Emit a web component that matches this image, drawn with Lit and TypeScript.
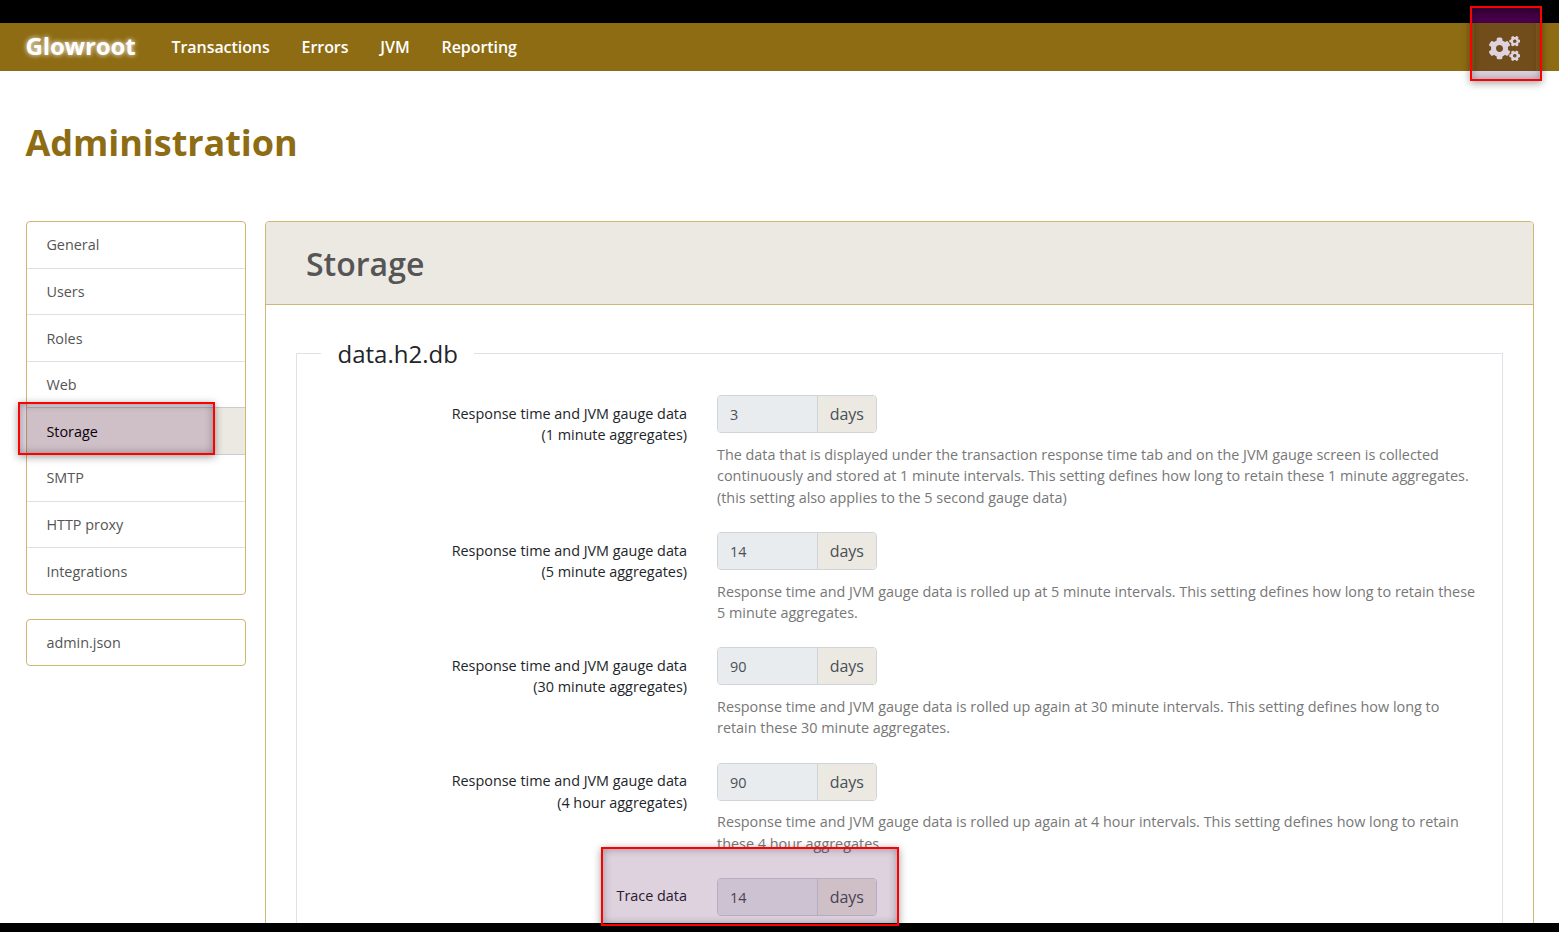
import { LitElement, html, css } from "lit";
import { customElement } from "lit/decorators.js";
import { classMap } from "lit/directives/class-map.js";

const NAV = ["Transactions", "Errors", "JVM", "Reporting"];
const MENU = ["General", "Users", "Roles", "Web", "Storage", "SMTP", "HTTP proxy", "Integrations"];

const ROWS = [
  {
    label: ["Response time and JVM gauge data", "(1 minute aggregates)"],
    value: "3",
    help: [
      "The data that is displayed under the transaction response time tab and on the JVM gauge screen is collected",
      "continuously and stored at 1 minute intervals. This setting defines how long to retain these 1 minute aggregates.",
      "(this setting also applies to the 5 second gauge data)",
    ],
  },
  {
    label: ["Response time and JVM gauge data", "(5 minute aggregates)"],
    value: "14",
    help: [
      "Response time and JVM gauge data is rolled up at 5 minute intervals. This setting defines how long to retain these",
      "5 minute aggregates.",
    ],
  },
  {
    label: ["Response time and JVM gauge data", "(30 minute aggregates)"],
    value: "90",
    help: [
      "Response time and JVM gauge data is rolled up again at 30 minute intervals. This setting defines how long to",
      "retain these 30 minute aggregates.",
    ],
  },
  {
    label: ["Response time and JVM gauge data", "(4 hour aggregates)"],
    value: "90",
    help: [
      "Response time and JVM gauge data is rolled up again at 4 hour intervals. This setting defines how long to retain",
      "these 4 hour aggregates.",
    ],
  },
  { label: ["Trace data"], value: "14", help: [] },
];

const SMALL_COG =
  "M512.1 191l-8.2 14.3c-3 5.3-9.4 7.5-15.1 5.4-11.8-4.4-22.6-10.7-32.1-18.6-4.6-3.8-5.8-10.5-2.8-15.7l8.2-14.3c-6.9-8-12.3-17.3-15.9-27.4h-16.5c-6 0-11.2-4.3-12.2-10.3-2-12-2.1-24.6 0-37.1 1-6 6.2-10.4 12.2-10.4h16.5c3.6-10.1 9-19.4 15.9-27.4l-8.2-14.3c-3-5.2-1.9-11.9 2.8-15.7 9.5-7.9 20.4-14.2 32.1-18.6 5.7-2.1 12.1.1 15.1 5.4l8.2 14.3c10.5-1.9 21.2-1.9 31.7 0L552 6.3c3-5.3 9.4-7.5 15.1-5.4 11.8 4.4 22.6 10.7 32.1 18.6 4.6 3.8 5.8 10.5 2.8 15.7l-8.2 14.3c6.9 8 12.3 17.3 15.9 27.4h16.5c6 0 11.2 4.3 12.2 10.3 2 12 2.1 24.6 0 37.1-1 6-6.2 10.4-12.2 10.4h-16.5c-3.6 10.1-9 19.4-15.9 27.4l8.2 14.3c3 5.2 1.9 11.9-2.8 15.7-9.5 7.9-20.4 14.2-32.1 18.6-5.7 2.1-12.1-.1-15.1-5.4l-8.2-14.3c-10.4 1.9-21.2 1.9-31.7 0zm-10.5-58.8c38.5 29.6 82.4-14.3 52.8-52.8-38.5-29.7-82.4 14.3-52.8 52.8z";
const LARGE_COG =
  "M386.3 286.1l33.7 16.8c10.1 5.8 14.5 18.1 10.5 29.1-8.9 24.2-26.4 46.4-42.6 65.8-7.4 8.9-20.2 11.1-30.3 5.3l-29.1-16.8c-16 13.7-34.6 24.6-54.9 31.7v33.6c0 11.6-8.3 21.6-19.7 23.6-24.6 4.2-50.4 4.4-75.9 0-11.5-2-20-11.9-20-23.6V418c-20.3-7.2-38.9-18-54.9-31.7L74 403c-10 5.8-22.9 3.6-30.3-5.3-16.2-19.4-33.3-41.6-42.2-65.7-4-10.9.4-23.2 10.5-29.1l33.3-16.8c-3.9-20.9-3.9-42.4 0-63.4L12 205.8c-10.1-5.8-14.6-18.1-10.5-29 8.9-24.2 26-46.4 42.2-65.8 7.4-8.9 20.2-11.1 30.3-5.3l29.1 16.8c16-13.7 34.6-24.6 54.9-31.7V57.1c0-11.5 8.2-21.5 19.6-23.5 24.6-4.2 50.5-4.4 76-.1 11.5 2 20 11.9 20 23.6v33.6c20.3 7.2 38.9 18 54.9 31.7l29.1-16.8c10-5.8 22.9-3.6 30.3 5.3 16.2 19.4 33.2 41.6 42.1 65.8 4 10.9.1 23.2-10 29.1l-33.7 16.8c3.9 21 3.9 42.5 0 63.5zm-117.6 21.1c59.2-77-28.7-164.9-105.7-105.7-59.2 77 28.7 164.9 105.7 105.7z";

@customElement("app-root")
export class AppRoot extends LitElement {
  static styles = css`
    :host {
      display: flex;
      flex-direction: column;
      position: relative;
      box-sizing: border-box;
      height: 932px;
      overflow: hidden;
      background: #fff;
      color: #212529;
      font: 14.4px/21.6px "Open Sans", "Noto Sans", sans-serif;
    }
    * { box-sizing: border-box; }
    .strip { flex: none; height: 23px; background: #000; }
    .strip.bottom { height: 9px; }
    .navbar {
      flex: none;
      display: flex;
      align-items: center;
      height: 48px;
      padding: 0 23px 0 25.5px;
      background: #8e6c14;
      color: #fff;
      font-size: 16px;
      font-weight: 600;
    }
    .brand {
      width: 146px;
      padding-bottom: 2px;
      font-size: 24px;
      letter-spacing: -0.15px;
      font-weight: 700;
      text-shadow: 0 0 5px #fff;
    }
    .links { display: flex; gap: 31.9px; padding-top: 1px; letter-spacing: -0.06px; }
    .tool {
      margin-left: auto;
      display: flex;
      align-items: center;
      width: 62px;
      height: 48px;
      padding: 2px 0 0 15px;
      background: #795e10;
    }
    .gears { width: 31.25px; height: 25px; display: block; fill: #fff; }
    .title {
      flex: none;
      margin: 0;
      padding: 49px 25.5px 56px;
      line-height: 45px;
      font-size: 36px;
      letter-spacing: -0.05px;
      font-weight: 700;
      color: #8e6c14;
    }
    .layout {
      flex: 1;
      min-height: 0;
      overflow: hidden;
      display: flex;
      align-items: flex-start;
      gap: 19px;
      padding: 0 25px 0 26px;
    }
    .side { width: 220px; display: flex; flex-direction: column; gap: 24px; }
    .list { border: 1px solid #ceb675; border-radius: 4px; overflow: hidden; color: #555; }
    .item { height: 46.6px; padding: 12.43px 19.4px 0; border-bottom: 1px solid #dfdfdf; }
    .item:last-child { border-bottom: 0; height: 45.6px; }
    .item.before { border-bottom-color: #ccc; }
    .item.active { background: #ece9e2; color: #000; border-bottom-color: #ccc; }
    .card { flex: 1; border: 1px solid #ceb675; border-radius: 4px; }
    .head {
      height: 83px;
      padding: 18px 40px 0;
      border-bottom: 1px solid #ceb675;
      border-radius: 3px 3px 0 0;
      background: #ece9e2;
      color: #555;
      font-size: 32px;
      line-height: 48px;
      font-weight: 600;
    }
    .body { padding: 31px 30px; }
    .group { margin: 0; padding: 24.34px 24px 22px; border: 1px solid #dee2e6; min-width: 0; }
    .legend { margin: 0; padding: 1px 16.5px 0; font-size: 24px; line-height: 34px; }
    .row { display: grid; grid-template-columns: 366px 1fr; column-gap: 30px; margin-bottom: 23.54px; }
    .label { padding-top: 7.45px; text-align: right; }
    .label div, .help div { white-space: nowrap; }
    .control { display: flex; width: 160px; height: 38px; border: 1px solid #ced4da; border-radius: 4px; overflow: hidden; color: #495057; }
    .value { width: 100px; padding: 8px 12px; background: #e9ecef; }
    .unit { flex: 1; padding: 6px 12px; line-height: 24px; border-left: 1px solid #ced4da; background: #ece9e2; font-size: 16px; }
    .help { margin-top: 10.5px; color: #777; }
    .mark {
      position: absolute;
      border: 2px solid #f00;
      background: rgba(75, 0, 75, 0.176);
      box-shadow: 0 2px 8px rgba(0, 0, 0, 0.38), inset 0 0 9px rgba(0, 0, 0, 0.33);
    }
    .mark-gears {
      left: 1470px;
      top: 6px;
      width: 72px;
      height: 75px;
      background: linear-gradient(#380039, #48004a 12px, #48004a 15px, rgba(75, 0, 75, 0.176) 15px);
    }
    .mark-storage { left: 18px; top: 402px; width: 197px; height: 53px; }
    .mark-trace { left: 601px; top: 847px; width: 298px; height: 79px; }
  `;

  render() {
    return html`
      <div class="strip"></div>
      <nav class="navbar">
        <div class="brand">Glowroot</div>
        <div class="links">${NAV.map((n) => html`<span>${n}</span>`)}</div>
        <div class="tool">
          <svg class="gears" viewBox="0 0 640 512">
            <path d=${LARGE_COG} />
            <path d=${SMALL_COG} />
            <path d=${SMALL_COG} transform="translate(0 298.9)" />
          </svg>
        </div>
      </nav>
      <h1 class="title">Administration</h1>
      <main class="layout">
        <aside class="side">
          <div class="list">
            ${MENU.map((m) => html`<div class=${classMap({ item: true, active: m === "Storage", before: m === "Web" })}>${m}</div>`)}
          </div>
          <div class="list"><div class="item">admin.json</div></div>
        </aside>
        <section class="card">
          <div class="head">Storage</div>
          <div class="body">
            <fieldset class="group">
              <legend class="legend">data.h2.db</legend>
              ${ROWS.map(
                (r) => html`<div class="row">
                  <div class="label">${r.label.map((l) => html`<div>${l}</div>`)}</div>
                  <div>
                    <div class="control"><div class="value">${r.value}</div><div class="unit">days</div></div>
                    <div class="help">${r.help.map((l) => html`<div>${l}</div>`)}</div>
                  </div>
                </div>`
              )}
            </fieldset>
          </div>
        </section>
      </main>
      <div class="strip bottom"></div>
      <div class="mark mark-gears"></div>
      <div class="mark mark-storage"></div>
      <div class="mark mark-trace"></div>
    `;
  }
}
